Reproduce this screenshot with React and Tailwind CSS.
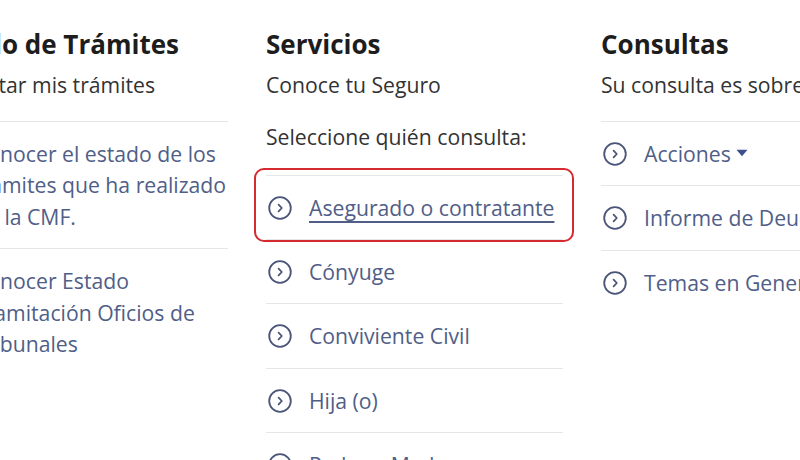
import React from 'react';

const ChevronCircle = () => (
    <svg viewBox="0 0 24 24" className="w-6 h-6 shrink-0 mt-1" fill="none" stroke="#4a5578" strokeWidth="1.8" strokeLinecap="round" strokeLinejoin="round">
        <circle cx="12" cy="12" r="10.8" />
        <path d="M10.6 8.6 L13.8 12 L10.6 15.4" />
    </svg>
);

const Item = ({ children, last }) => (
    <li className={`flex items-start gap-[17px] py-4 pl-[2px] ${last ? '' : 'border-b border-[#e6e6e6]'}`}>
        <ChevronCircle />
        <span className="text-[21.2px] leading-[31.5px] text-[#505e88]">{children}</span>
    </li>
);

const Column = ({ title, subtitle, children }) => (
    <div className="w-[297px] shrink-0">
        <h2 className="text-[26px] leading-[32px] font-bold text-[#1d1d1d] whitespace-nowrap">{title}</h2>
        <p className="mt-[9px] text-[21.2px] leading-[31.5px] text-[#333333] whitespace-nowrap">{subtitle}</p>
        {children}
    </div>
);

export default function App() {
    return (
        <div className="w-[800px] h-[460px] overflow-hidden bg-white font-['Open_Sans',sans-serif]">
            <div className="flex gap-[38px] -ml-[69px] pt-[28px]">
                {/* Trámites */}
                <Column title="Estado de Trámites" subtitle="Consultar mis trámites">
                    <ul className="mt-[20px] border-t border-[#e6e6e6]">
                        <Item>Conocer el estado de los trámites que ha realizado en la CMF.</Item>
                        <Item last>Conocer Estado Tramitación Oficios de Tribunales</Item>
                    </ul>
                </Column>

                {/* Servicios */}
                <Column title="Servicios" subtitle="Conoce tu Seguro">
                    <p className="mt-[20px] text-[21.2px] leading-[31.5px] text-[#333333]">Seleccione quién consulta:</p>
                    <ul className="mt-[23px] border-t border-[#e6e6e6]">
                        <li className="relative flex items-start gap-[17px] pt-4 pb-[15px] pl-[2px] border-b border-[#e6e6e6]">
                            <div className="absolute -left-[12px] -right-[11px] -top-[8px] -bottom-[3px] border-2 border-[#d42a30] rounded-[10px]" />
                            <ChevronCircle />
                            <span className="text-[21.2px] leading-[31.5px] text-[#505e88] underline underline-offset-[5px] decoration-[1.5px]">Asegurado o contratante</span>
                        </li>
                        <Item>Cónyuge</Item>
                        <Item>Conviviente Civil</Item>
                        <Item>Hija (o)</Item>
                        <Item last>Padre o Madre</Item>
                    </ul>
                </Column>

                {/* Consultas */}
                <Column title="Consultas" subtitle="Su consulta es sobre:">
                    <ul className="mt-[20px] border-t border-[#e6e6e6]">
                        <li className="flex items-start gap-[17px] py-4 pl-[2px] border-b border-[#e6e6e6]">
                            <ChevronCircle />
                            <span className="flex items-center gap-[5px] text-[21.2px] leading-[31.5px] text-[#505e88]">
                                Acciones
                                <svg viewBox="0 0 12 8" className="w-[12px] h-[8px]" fill="#3b4f8c">
                                    <path d="M0.5 0.8 L11.5 0.8 L6 7.2 Z" />
                                </svg>
                            </span>
                        </li>
                        <Item>Informe de Deudas</Item>
                        <Item last>Temas en General</Item>
                    </ul>
                </Column>
            </div>
        </div>
    );
}
